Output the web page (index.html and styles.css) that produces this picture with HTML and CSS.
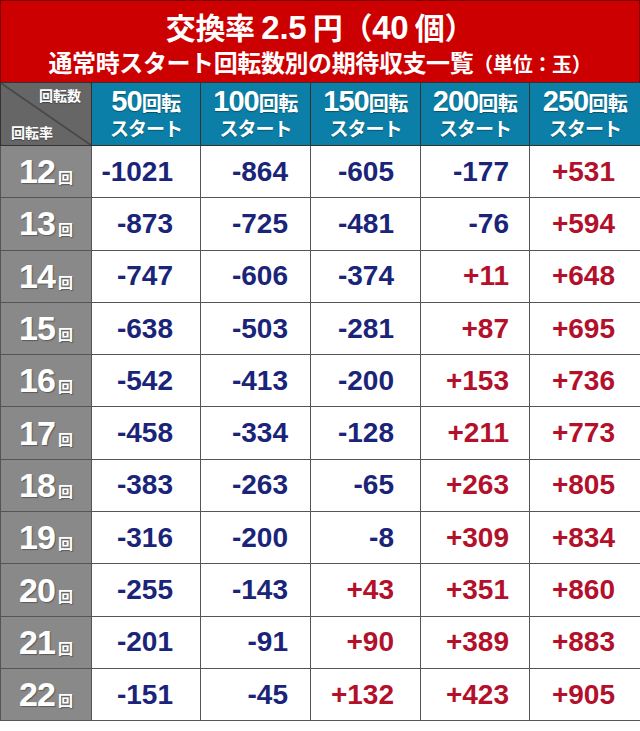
FILE: index.html
```html
<!DOCTYPE html>
<html lang="ja">
<head>
<meta charset="utf-8">
<link rel="stylesheet" href="styles.css">
</head>
<body>
<div class="sheet">
  <div class="title">
    <div class="t1">交換率 <span class="num">2.5</span> 円（<span class="num">40</span> 個）</div>
    <div class="t2">通常時スタート回転数別の期待収支一覧<span class="unit">（単位：玉）</span></div>
  </div>
  <table class="grid">
    <colgroup>
      <col class="c0"><col class="c1"><col class="c2"><col class="c3"><col class="c4"><col class="c5">
    </colgroup>
    <thead>
      <tr class="head">
        <th class="corner"><span class="ctop">回転数</span><span class="cbot">回転率</span></th>
        <th><span class="hl"><span class="hn">50</span>回転</span><span class="hs">スタート</span></th>
        <th><span class="hl"><span class="hn">100</span>回転</span><span class="hs">スタート</span></th>
        <th><span class="hl"><span class="hn">150</span>回転</span><span class="hs">スタート</span></th>
        <th><span class="hl"><span class="hn">200</span>回転</span><span class="hs">スタート</span></th>
        <th><span class="hl"><span class="hn">250</span>回転</span><span class="hs">スタート</span></th>
      </tr>
    </thead>
    <tbody>
      <tr><th class="rl">12<small>回</small></th><td class="n p1">-1021</td><td class="n p2">-864</td><td class="n p3">-605</td><td class="n p4">-177</td><td class="p p5">+531</td></tr>
      <tr><th class="rl">13<small>回</small></th><td class="n p1">-873</td><td class="n p2">-725</td><td class="n p3">-481</td><td class="n p4">-76</td><td class="p p5">+594</td></tr>
      <tr><th class="rl">14<small>回</small></th><td class="n p1">-747</td><td class="n p2">-606</td><td class="n p3">-374</td><td class="p p4">+11</td><td class="p p5">+648</td></tr>
      <tr><th class="rl">15<small>回</small></th><td class="n p1">-638</td><td class="n p2">-503</td><td class="n p3">-281</td><td class="p p4">+87</td><td class="p p5">+695</td></tr>
      <tr><th class="rl">16<small>回</small></th><td class="n p1">-542</td><td class="n p2">-413</td><td class="n p3">-200</td><td class="p p4">+153</td><td class="p p5">+736</td></tr>
      <tr><th class="rl">17<small>回</small></th><td class="n p1">-458</td><td class="n p2">-334</td><td class="n p3">-128</td><td class="p p4">+211</td><td class="p p5">+773</td></tr>
      <tr><th class="rl">18<small>回</small></th><td class="n p1">-383</td><td class="n p2">-263</td><td class="n p3">-65</td><td class="p p4">+263</td><td class="p p5">+805</td></tr>
      <tr><th class="rl">19<small>回</small></th><td class="n p1">-316</td><td class="n p2">-200</td><td class="n p3">-8</td><td class="p p4">+309</td><td class="p p5">+834</td></tr>
      <tr><th class="rl">20<small>回</small></th><td class="n p1">-255</td><td class="n p2">-143</td><td class="p p3">+43</td><td class="p p4">+351</td><td class="p p5">+860</td></tr>
      <tr><th class="rl">21<small>回</small></th><td class="n p1">-201</td><td class="n p2">-91</td><td class="p p3">+90</td><td class="p p4">+389</td><td class="p p5">+883</td></tr>
      <tr><th class="rl">22<small>回</small></th><td class="n p1">-151</td><td class="n p2">-45</td><td class="p p3">+132</td><td class="p p4">+423</td><td class="p p5">+905</td></tr>
    </tbody>
  </table>
</div>
</body>
</html>
```

FILE: styles.css
```css
html, body {
  margin: 0;
  padding: 0;
  background: #fff;
}
.sheet {
  width: 640px;
  font-family: "Noto Sans CJK JP", "Liberation Sans", sans-serif;
}
.title {
  box-sizing: border-box;
  height: 82px;
  background: #cc0000;
  border-top: 1px solid #7a0000;
  border-left: 1px solid #7a0000;
  border-right: 1px solid #7a0000;
  color: #fff;
  text-align: center;
  font-weight: 700;
  display: flex;
  flex-direction: column;
  align-items: center;
  padding-top: 6px;
}
.t1 {
  font-size: 30px;
  line-height: 38px;
  letter-spacing: -0.3px;
}
.t1 .num {
  font-family: "Liberation Sans", sans-serif;
  font-size: 33px;
}
.t2 {
  font-size: 24px;
  line-height: 30px;
  letter-spacing: -0.4px;
}
.t2 .unit {
  font-size: 20px;
  letter-spacing: -0.3px;
}
.grid {
  width: 640px;
  border-collapse: collapse;
  table-layout: fixed;
}
.c0 { width: 91px; }
.c1 { width: 109px; }
.c2 { width: 110px; }
.c3 { width: 110px; }
.c4 { width: 109px; }
.c5 { width: 111px; }
.grid th, .grid td {
  padding: 0;
  border: 1px solid #555;
}
.head th {
  height: 62px;
  background: #0b7fa7;
  color: #fff;
  font-weight: 700;
  font-size: 20px;
  text-align: center;
  vertical-align: top;
  border-color: #333;
  text-shadow: 0 1px 1px rgba(0,0,0,0.35);
}
.head .hl {
  display: block;
  line-height: 26px;
  margin-top: 5px;
  letter-spacing: -0.5px;
}
.head .hn {
  font-family: "Liberation Sans", sans-serif;
  font-size: 29px;
  letter-spacing: -1px;
}
.head .hs {
  display: block;
  font-size: 19px;
  line-height: 22px;
  margin-top: 1px;
  letter-spacing: -1px;
}
.head th.corner {
  position: relative;
  background: linear-gradient(to top right, #666 calc(50% - 0.8px), #222 50%, #666 calc(50% + 0.8px));
  font-size: 14px;
  line-height: 15px;
}
.ctop {
  position: absolute;
  top: 5px;
  right: 10px;
}
.cbot {
  position: absolute;
  bottom: 5px;
  left: 10px;
}
tbody tr {
  height: 52.3px;
}
.rl {
  background: #898989;
  color: #fff;
  font-family: "Liberation Sans", sans-serif;
  font-weight: 700;
  font-size: 34px;
  text-align: center;
  letter-spacing: -1px;
  text-shadow: 1px 1px 1px rgba(0,0,0,0.35);
  border-color: #444;
}
.rl small {
  font-family: "Noto Sans CJK JP", sans-serif;
  font-size: 15px;
  margin-left: 3px;
  letter-spacing: 0;
}
td {
  background: #fff;
  font-family: "Liberation Sans", sans-serif;
  font-weight: 700;
  font-size: 28px;
  text-align: right;
  border-color: #666 #888;
}
td.n { color: #1a2478; }
td.p { color: #b3102b; }
td.p1 { padding-right: 27px; }
td.p2 { padding-right: 22px; }
td.p3 { padding-right: 26px; }
td.p4 { padding-right: 20px; }
td.p5 { padding-right: 25px; }
```
